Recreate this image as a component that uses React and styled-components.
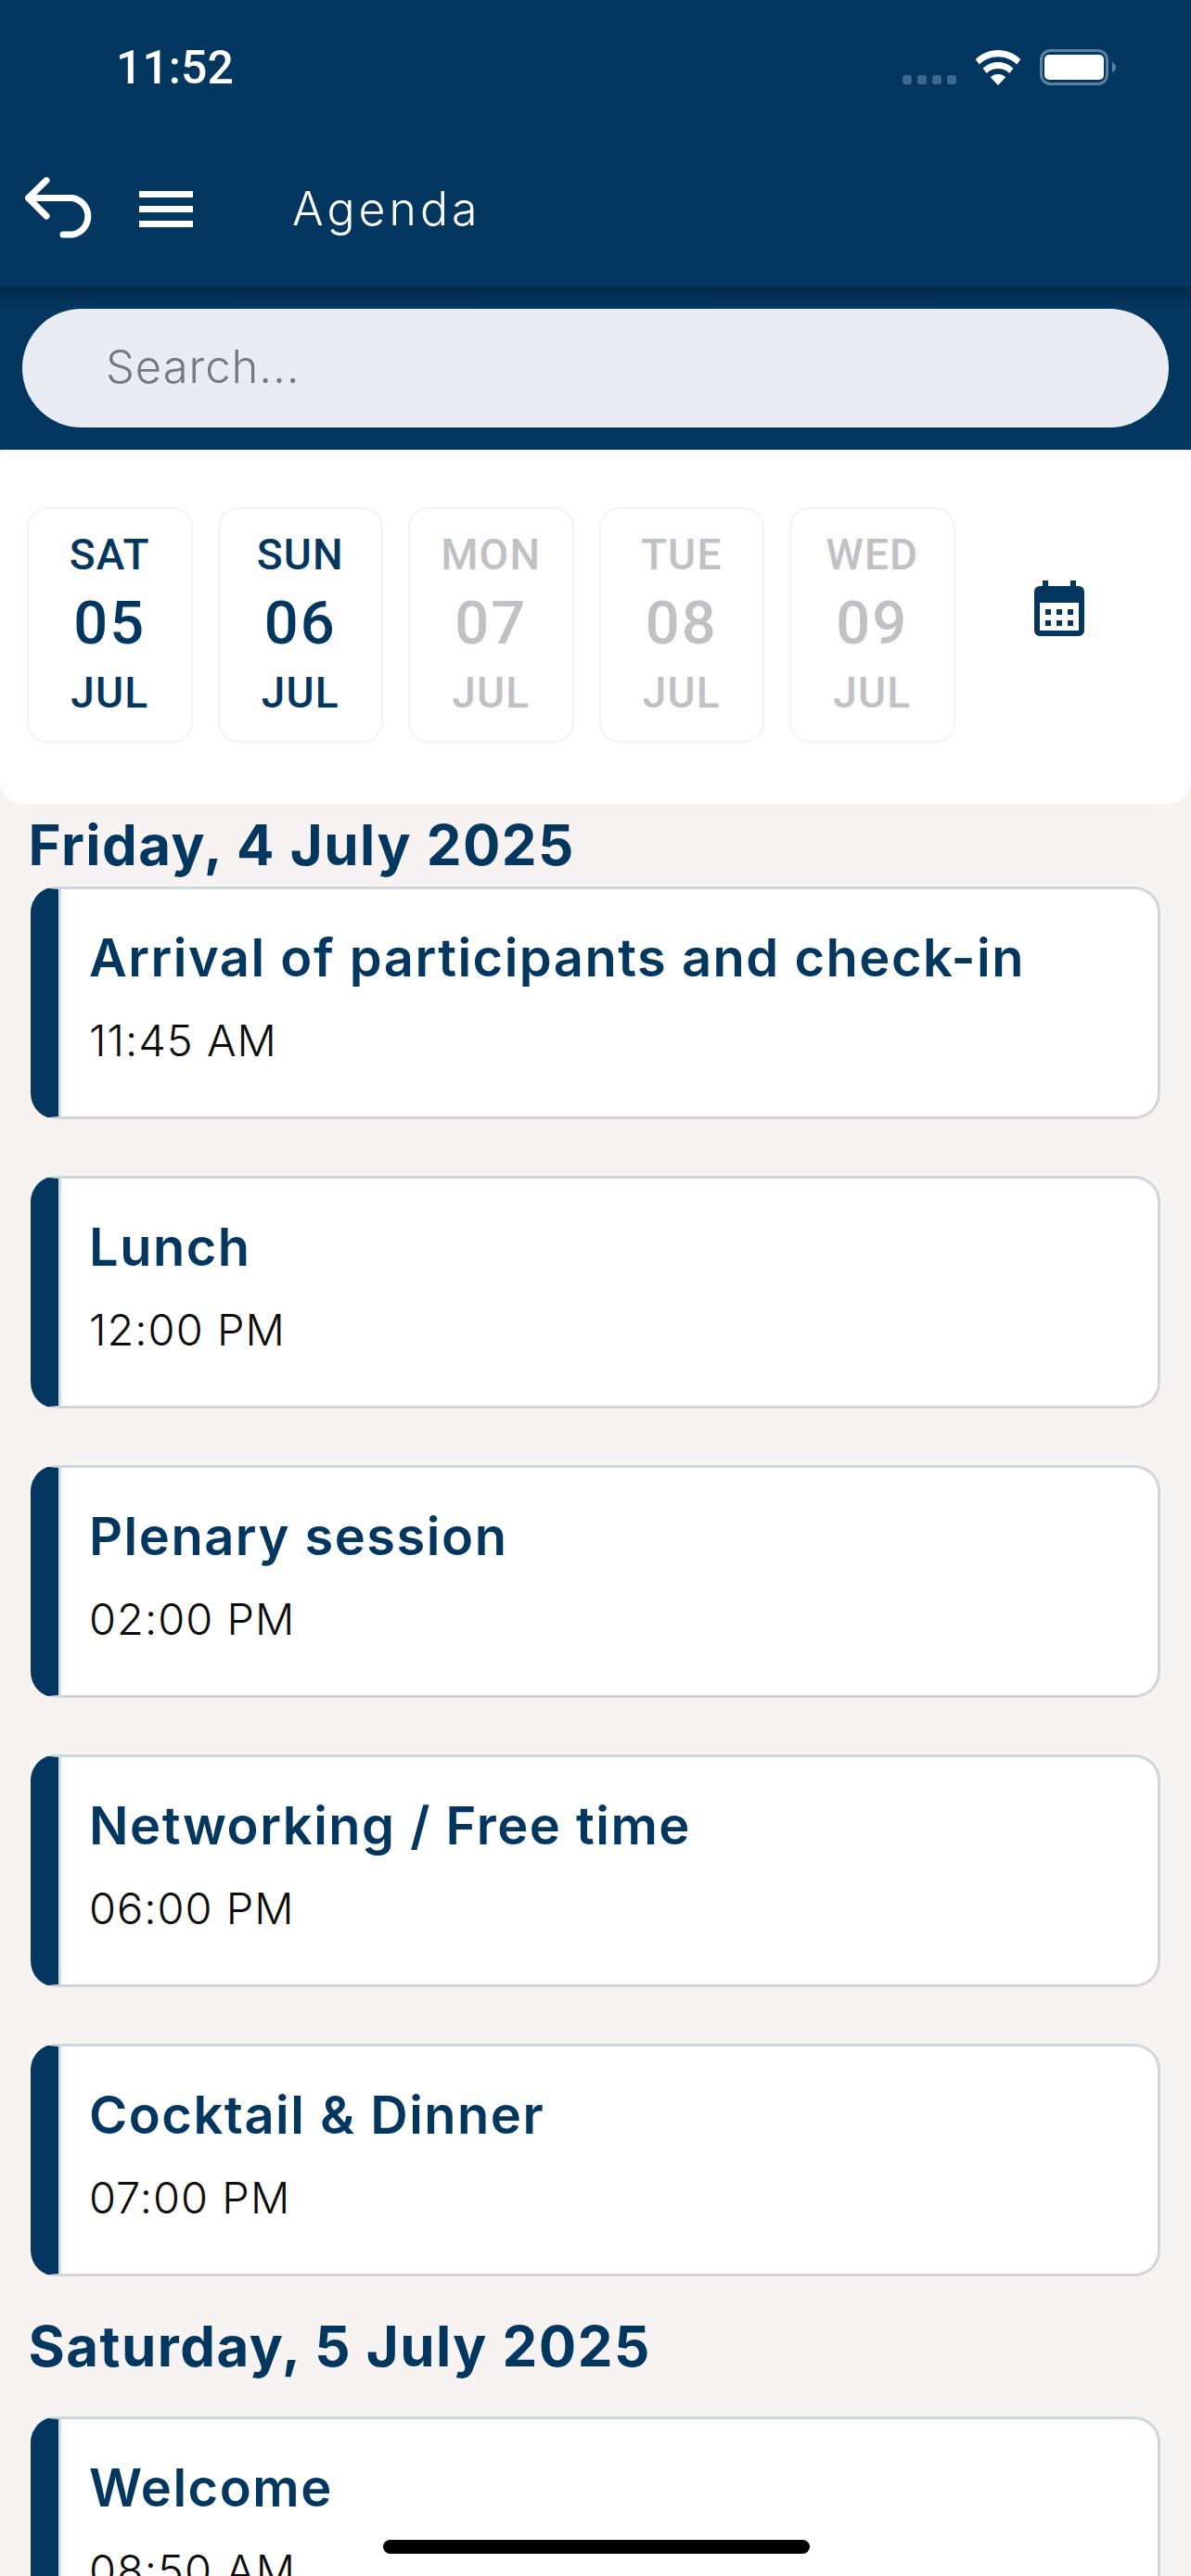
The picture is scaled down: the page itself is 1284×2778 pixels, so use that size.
import React from 'react';
import styled, { createGlobalStyle } from 'styled-components';

const navy = '#03375f';

const GlobalStyle = createGlobalStyle`
  html, body {
    margin: 0;
    padding: 0;
    background: #f6f3f2;
  }
  * {
    box-sizing: border-box;
  }
`;

const Page = styled.div`
  position: relative;
  width: 1284px;
  height: 2778px;
  overflow: hidden;
  background: #f6f3f2;
  font-family: Inter, "Liberation Sans", sans-serif;
`;

const Header = styled.header`
  height: 309px;
  background: ${navy};
  display: flex;
  flex-direction: column;
`;

const StatusBar = styled.div`
  height: 142px;
  padding: 53px 81px 0 125px;
  display: flex;
  justify-content: space-between;
  align-items: flex-start;
`;

const Clock = styled.span`
  font-family: Roboto, sans-serif;
  font-size: 50px;
  font-weight: 500;
  line-height: 40px;
  color: #fff;
`;

const StatusIcons = styled.div`
  display: flex;
  align-items: flex-end;
  gap: 20px;
  height: 39px;
`;

const SignalDots = styled.div`
  display: flex;
  gap: 6px;
  margin-bottom: 1px;
`;

const SignalDot = styled.i`
  display: block;
  width: 10px;
  height: 10px;
  border-radius: 3px;
  background: #3f6890;
`;

const TopBar = styled.div`
  display: flex;
  align-items: flex-start;
  padding: 48.5px 0 0 27px;
`;

const MenuLines = styled.div`
  display: flex;
  flex-direction: column;
  gap: 9.5px;
  width: 58px;
  margin: 15.5px 0 0 47px;
`;

const MenuLine = styled.i`
  display: block;
  height: 6.5px;
  background: #fff;
`;

const PageTitle = styled.h1`
  margin: -2px 0 0 107px;
  font-size: 50px;
  font-weight: 300;
  line-height: 72px;
  letter-spacing: 4px;
  color: #fff;
`;

const SearchStrip = styled.div`
  height: 176px;
  padding: 24px;
  background: ${navy};
  background-image: linear-gradient(#04294a, ${navy} 22px);
`;

const SearchField = styled.div`
  height: 128px;
  border-radius: 64px;
  background: #e9ecf2;
  padding: 0 0 3px 90px;
  display: flex;
  align-items: center;
  font-size: 49px;
  font-weight: 300;
  letter-spacing: 0.9px;
  color: #75797f;
`;

const DatePanel = styled.section`
  height: 382px;
  background: #fffefe;
  border-radius: 10px 10px 26px 26px;
  padding: 62px 0 0 29px;
  display: flex;
  align-items: flex-start;
  gap: 27px;
`;

const DateCard = styled.div`
  width: 178.5px;
  height: 254px;
  border: 2px solid #f3f2f4;
  border-radius: 22px;
  padding-top: 26px;
  display: flex;
  flex-direction: column;
  align-items: center;
  font-family: Roboto, sans-serif;
  color: ${({ $active }) => ($active ? navy : '#c1c0c4')};
`;

const DayName = styled.span`
  font-size: 46px;
  font-weight: 500;
  line-height: 46px;
  letter-spacing: 1.2px;
`;

const DayNumber = styled.span`
  font-size: 65px;
  font-weight: 500;
  line-height: 72px;
  margin-top: 15px;
  letter-spacing: 2px;
`;

const MonthName = styled.span`
  font-size: 46px;
  font-weight: 500;
  line-height: 46px;
  margin-top: 16px;
  letter-spacing: 1.2px;
`;

const CalendarButton = styled.button`
  border: 0;
  padding: 0;
  background: none;
  margin: 79px 0 0 58px;
  display: flex;
`;

const Agenda = styled.main`
  padding: 0 33px;
`;

const DayHeading = styled.h2`
  margin: 0 0 0 -2.5px;
  font-size: 60px;
  font-weight: 700;
  line-height: 72px;
  color: ${navy};
  letter-spacing: 1.45px;
  padding-top: ${({ $first }) => ($first ? '8px' : '38.5px')};
  padding-bottom: ${({ $first }) => ($first ? '9px' : '40.5px')};
`;

const EventList = styled.div`
  display: flex;
  flex-direction: column;
  gap: 61px;
`;

const EventCard = styled.article`
  height: 251px;
  border: 3px solid #cfd5da;
  border-top-color: #cbd8de;
  border-bottom-color: #d3d3d7;
  border-left: 30px solid ${navy};
  border-radius: 28px;
  background: #fff;
`;

const EventBody = styled.div`
  height: 100%;
  border-left: 3px solid #cfdde3;
  padding: 38px 0 0 30px;
`;

const EventTitle = styled.h3`
  margin: 0;
  font-size: 56px;
  font-weight: 600;
  line-height: 72px;
  letter-spacing: 1.5px;
  color: ${navy};
  white-space: nowrap;
`;

const EventTime = styled.div`
  margin-top: 24px;
  font-size: 47px;
  font-weight: 300;
  line-height: 58px;
  letter-spacing: 1px;
  color: #0d0d0d;
`;

const HomeIndicator = styled.div`
  position: absolute;
  left: 413px;
  top: 2739px;
  width: 460px;
  height: 15px;
  border-radius: 8px;
  background: #000;
`;

const WifiIcon = () => (
  <svg width="50" height="38" viewBox="0 0 50 38" fill="#fff">
    <path d="M25 0C15.600 0 7.200 3.700 0.700 10L4.800 15.500C10.200 10.300 17.300 7.300 25 7.300S39.800 10.300 45.200 15.500L49.300 10C42.800 3.700 34.400 0 25 0Z" />
    <path d="M25 13C18.700 13 13 15.500 8.600 19.700L12.700 25C15.900 22 20.200 20.100 25 20.100S34.100 22 37.300 25L41.400 19.700C37 15.500 31.300 13 25 13Z" />
    <path d="M25 26C22 26 19.100 27.200 16.800 29.200L25 38L33.200 29.200C30.900 27.200 28 26 25 26Z" />
  </svg>
);

const BatteryIcon = () => (
  <svg width="82" height="39" viewBox="0 0 82 39">
    <rect x="1.500" y="1.500" width="71" height="36" rx="10" fill="none" stroke="#5b7f9f" strokeWidth="3" />
    <rect x="5" y="6" width="64" height="27" rx="5" fill="#fff" />
    <path d="M78 14c2.500 .6 4 2.700 4 5.500S80.500 24.400 78 25z" fill="#5b7f9f" />
  </svg>
);

const BackIcon = () => (
  <svg width="76" height="66" viewBox="0 0 76 66" fill="none" stroke="#fff" strokeWidth="7" strokeLinecap="round" strokeLinejoin="round">
    <path d="M3.500 22.500 23 3.500M3.500 22.500 23 42M3.500 22.500H51A20 20 0 0 1 51 62H41" />
  </svg>
);

const CalendarIcon = () => (
  <svg width="54" height="60" viewBox="0 0 54 60">
    <path fill={navy} d="M9 0h6v6h24V0h6v6h3a6 6 0 0 1 6 6v42a6 6 0 0 1-6 6H6a6 6 0 0 1-6-6V12a6 6 0 0 1 6-6h3z" />
    <rect x="6" y="24" width="42" height="30" fill="#fff" />
    {[12, 24, 36].map((x) =>
      [31, 43].map((y) => <rect key={`${x}-${y}`} x={x} y={y} width="6" height="6" fill={navy} />)
    )}
  </svg>
);

const days = [
  { name: 'SAT', number: '05', active: true },
  { name: 'SUN', number: '06', active: true },
  { name: 'MON', number: '07' },
  { name: 'TUE', number: '08' },
  { name: 'WED', number: '09' },
];

const fridayEvents = [
  { title: 'Arrival of participants and check-in', time: '11:45 AM' },
  { title: 'Lunch', time: '12:00 PM' },
  { title: 'Plenary session', time: '02:00 PM' },
  { title: 'Networking / Free time', time: '06:00 PM' },
  { title: 'Cocktail & Dinner', time: '07:00 PM' },
];

const Event = ({ title, time }) => (
  <EventCard>
    <EventBody>
      <EventTitle>{title}</EventTitle>
      <EventTime>{time}</EventTime>
    </EventBody>
  </EventCard>
);

const App = () => (
  <Page>
    <GlobalStyle />
    <Header>
      <StatusBar>
        <Clock>11:52</Clock>
        <StatusIcons>
          <SignalDots>
            {[0, 1, 2, 3].map((i) => <SignalDot key={i} />)}
          </SignalDots>
          <WifiIcon />
          <BatteryIcon />
        </StatusIcons>
      </StatusBar>
      <TopBar>
        <BackIcon />
        <MenuLines>
          <MenuLine />
          <MenuLine />
          <MenuLine />
        </MenuLines>
        <PageTitle>Agenda</PageTitle>
      </TopBar>
    </Header>
    <SearchStrip>
      <SearchField>Search...</SearchField>
    </SearchStrip>
    <DatePanel>
      {days.map((day) => (
        <DateCard key={day.name} $active={day.active}>
          <DayName>{day.name}</DayName>
          <DayNumber>{day.number}</DayNumber>
          <MonthName>JUL</MonthName>
        </DateCard>
      ))}
      <CalendarButton>
        <CalendarIcon />
      </CalendarButton>
    </DatePanel>
    <Agenda>
      <DayHeading $first>Friday, 4 July 2025</DayHeading>
      <EventList>
        {fridayEvents.map((event) => <Event key={event.title} {...event} />)}
      </EventList>
      <DayHeading>Saturday, 5 July 2025</DayHeading>
      <Event title="Welcome" time="08:50 AM" />
    </Agenda>
    <HomeIndicator />
  </Page>
);

export default App;
